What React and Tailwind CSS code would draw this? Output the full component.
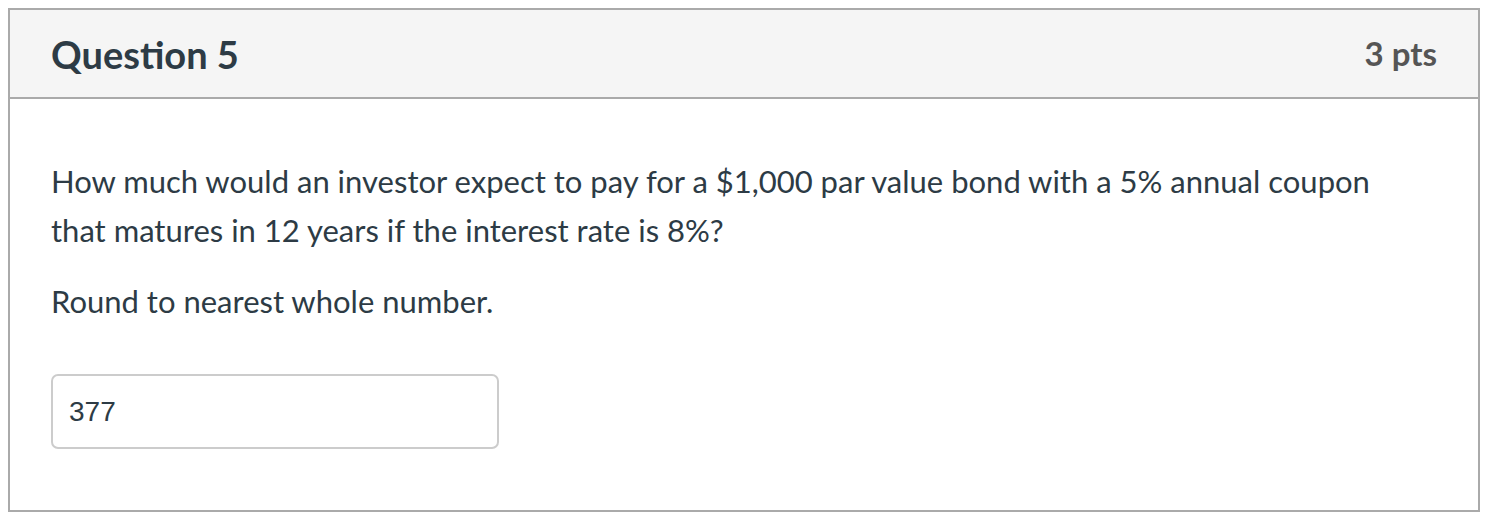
export default function App() {
  return (
    <div className="min-h-[520px] bg-white pl-[8px] pr-[12px] pt-[8px] font-['Lato',sans-serif] text-[#2d3b45]">
      <div className="border-2 border-[#aaaaaa]">
        <div className="flex h-[89px] items-center justify-between border-b-2 border-[#aaaaaa] bg-[#f5f5f5] pl-[41px] pr-[41px]">
          <h2 className="text-[38px] font-bold leading-none">Question 5</h2>
          <span className="text-[33px] font-bold leading-none text-[#555555]">3 pts</span>
        </div>
        <div className="pb-[61px] pl-[41px] pr-[41px] pt-[58px]">
          <p className="max-w-[1340px] text-[31px] leading-[49px]">
            How much would an investor expect to pay for a $1,000 par value bond with a 5% annual coupon
            that matures in 12 years if the interest rate is 8%?
          </p>
          <p className="mt-[22px] text-[31px] leading-[49px]">Round to nearest whole number.</p>
          <div className="mt-[48px] flex h-[75px] w-[448px] items-center rounded-[7px] border-2 border-[#cccccc] px-[16px] font-['Liberation_Sans',Arial,sans-serif] text-[28px] text-[#2d3b45]">
            377
          </div>
        </div>
      </div>
    </div>
  );
}
